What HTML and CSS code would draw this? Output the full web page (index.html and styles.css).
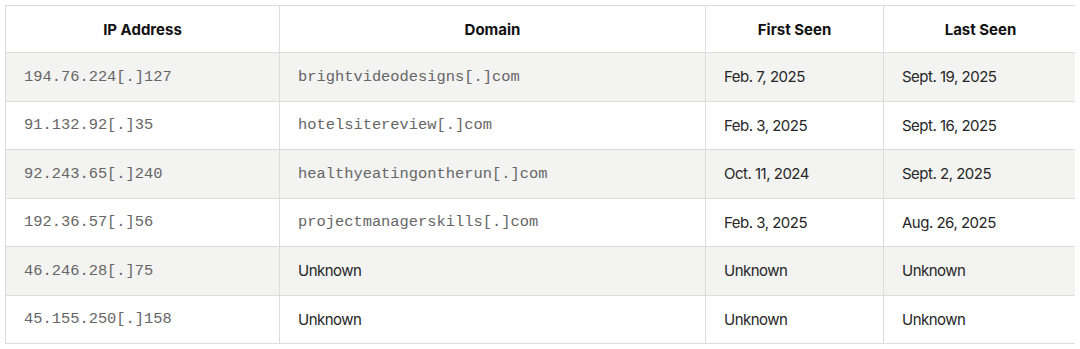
FILE: index.html
```html
<!DOCTYPE html>
<html lang="en">
<head>
    <meta charset="UTF-8">
    <meta name="viewport" content="width=device-width, initial-scale=1.0">
    <title>Infrastructure</title>
    <link rel="stylesheet" href="styles.css">
</head>
<body>

<table class="ioc-table">
    <colgroup>
        <col class="col-ip">
        <col class="col-domain">
        <col class="col-first">
        <col class="col-last">
    </colgroup>
    <thead>
        <tr>
            <th>IP Address</th>
            <th>Domain</th>
            <th>First Seen</th>
            <th>Last Seen</th>
        </tr>
    </thead>
    <tbody>
        <tr>
            <td class="mono">194.76.224[.]127</td>
            <td class="mono">brightvideodesigns[.]com</td>
            <td>Feb. 7, 2025</td>
            <td>Sept. 19, 2025</td>
        </tr>
        <tr>
            <td class="mono">91.132.92[.]35</td>
            <td class="mono">hotelsitereview[.]com</td>
            <td>Feb. 3, 2025</td>
            <td>Sept. 16, 2025</td>
        </tr>
        <tr>
            <td class="mono">92.243.65[.]240</td>
            <td class="mono">healthyeatingontherun[.]com</td>
            <td>Oct. 11, 2024</td>
            <td>Sept. 2, 2025</td>
        </tr>
        <tr>
            <td class="mono">192.36.57[.]56</td>
            <td class="mono">projectmanagerskills[.]com</td>
            <td>Feb. 3, 2025</td>
            <td>Aug. 26, 2025</td>
        </tr>
        <tr>
            <td class="mono">46.246.28[.]75</td>
            <td>Unknown</td>
            <td>Unknown</td>
            <td>Unknown</td>
        </tr>
        <tr>
            <td class="mono">45.155.250[.]158</td>
            <td>Unknown</td>
            <td>Unknown</td>
            <td>Unknown</td>
        </tr>
    </tbody>
</table>

</body>
</html>
```

FILE: styles.css
```css
body {
    margin: 5px;
    background-color: #ffffff;
    font-family: 'Inter', 'Noto Sans', sans-serif;
    color: #1f1f1f;
}

.ioc-table {
    width: 1072px;
    border-collapse: collapse;
    table-layout: fixed;
    border: 1px solid #dcdcdc;
}

.col-ip { width: 274px; }
.col-domain { width: 426px; }
.col-first { width: 178px; }
.col-last { width: 194px; }

.ioc-table th,
.ioc-table td {
    border: 1px solid #dcdcdc;
    padding: 0 18px;
    text-align: left;
    vertical-align: middle;
}

.ioc-table th {
    height: 46px;
    text-align: center;
    font-size: 15px;
    font-weight: 700;
    color: #111111;
}

.ioc-table td {
    height: 47.5px;
    font-size: 15px;
    font-weight: 400;
    letter-spacing: -0.5px;
    color: #262626;
}

.ioc-table td.mono {
    font-family: 'Courier New', Courier, 'Liberation Mono', monospace;
    font-size: 15.4px;
    letter-spacing: 0;
    color: #666666;
}

/* striped rows */
.ioc-table tbody tr:nth-child(odd) {
    background-color: #f3f3f1;
}
```
